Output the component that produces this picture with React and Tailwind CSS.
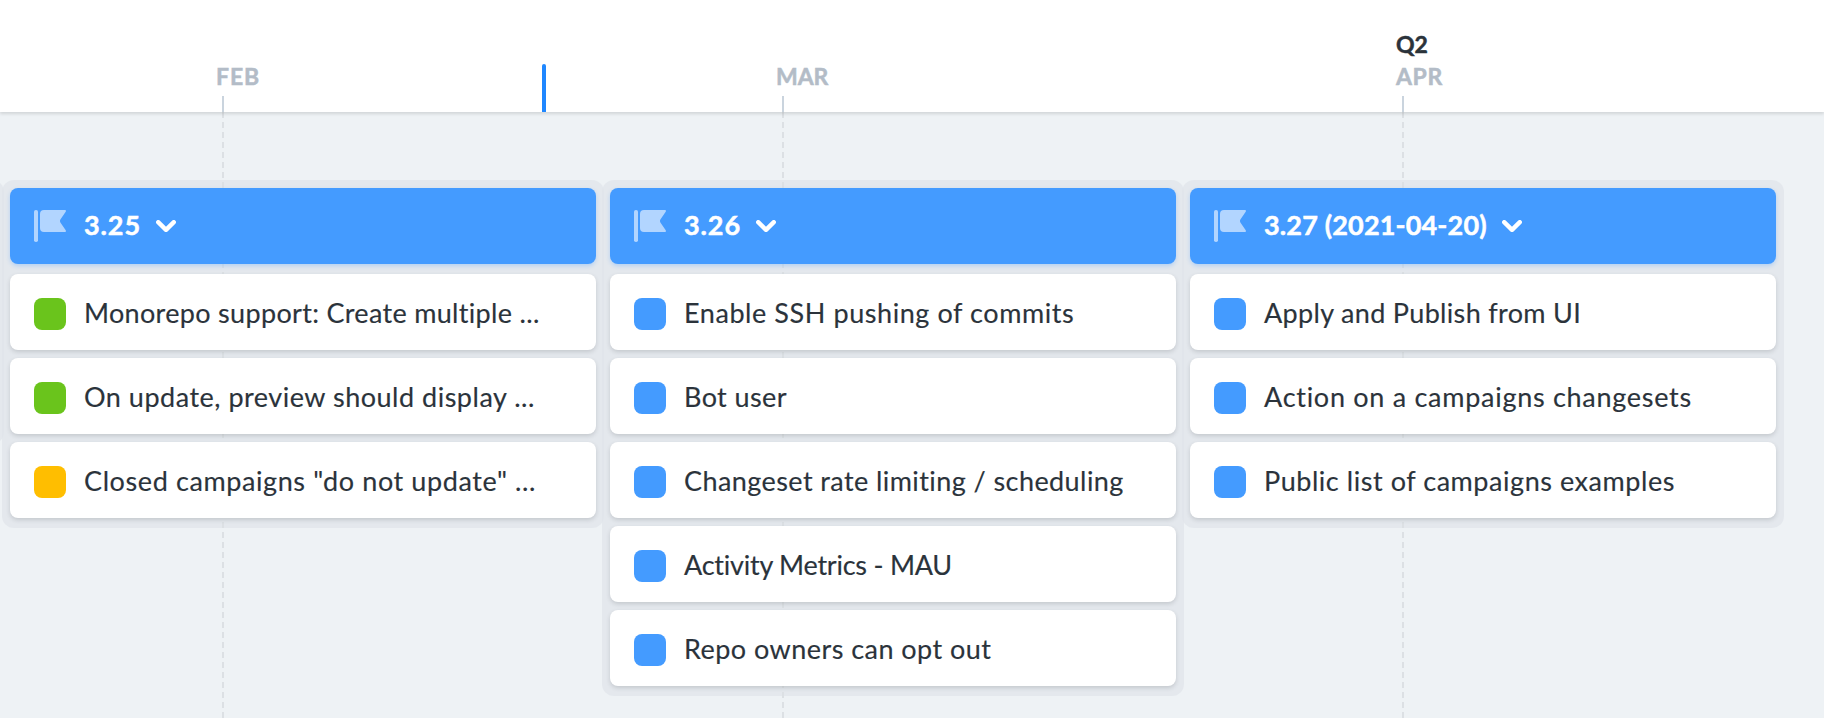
const GREEN = "bg-[#6ac41c]";
const BLUE = "bg-[#449bff]";
const AMBER = "bg-[#ffbe00]";

const releases = [
  {
    title: "3.25",
    tracking: "tracking-[0.9px]",
    width: "w-[602px]",
    items: [
      { text: "Monorepo support: Create multiple ...", color: GREEN, tracking: "tracking-[0.32px]" },
      { text: "On update, preview should display ...", color: GREEN, tracking: "tracking-[0.51px]" },
      { text: 'Closed campaigns "do not update" ...', color: AMBER, tracking: "tracking-[0.6px]" },
    ],
  },
  {
    title: "3.26",
    tracking: "tracking-[0.9px]",
    width: "w-[582px]",
    items: [
      { text: "Enable SSH pushing of commits", color: BLUE, tracking: "tracking-[0.57px]" },
      { text: "Bot user", color: BLUE, tracking: "tracking-[0.4px]" },
      { text: "Changeset rate limiting / scheduling", color: BLUE, tracking: "tracking-[0.42px]" },
      { text: "Activity Metrics - MAU", color: BLUE, tracking: "tracking-[-0.24px]" },
      { text: "Repo owners can opt out", color: BLUE, tracking: "tracking-[0.46px]" },
    ],
  },
  {
    title: "3.27 (2021-04-20)",
    tracking: "tracking-[0.15px]",
    width: "w-[602px]",
    items: [
      { text: "Apply and Publish from UI", color: BLUE, tracking: "tracking-[0.33px]" },
      { text: "Action on a campaigns changesets", color: BLUE, tracking: "tracking-[0.72px]" },
      { text: "Public list of campaigns examples", color: BLUE, tracking: "tracking-[0.55px]" },
    ],
  },
];

const months = [
  { label: "FEB", width: "w-[560px]", tracking: "tracking-[0.9px]" },
  { label: "MAR", width: "w-[620px]", tracking: "tracking-[-0.1px]" },
  { label: "APR", quarter: "Q2", width: "w-[428px]", tracking: "tracking-[0.6px]" },
];

function FlagIcon() {
  return (
    <svg className="mt-[22px] size-8 shrink-0 fill-[#b2d5ff]" viewBox="0 0 32 32">
      <rect x="0" y="0" width="4" height="32" rx="1.8" />
      <path d="M10 0H31Q32.6 .2 31.7 1.8L26.4 9.6Q25.6 11 26.4 12.4L31.7 20.2Q32.6 21.8 31 22H10Q6 22 6 18V4Q6 0 10 0Z" />
    </svg>
  );
}

function Chevron() {
  return (
    <svg className="mt-8 ml-[15px] h-[13px] w-5 shrink-0" viewBox="0 0 20 13" fill="none">
      <path d="M2.2 2.2L10 9.8L17.8 2.2" stroke="white" strokeWidth="4.4" strokeLinecap="round" strokeLinejoin="round" />
    </svg>
  );
}

function Timeline() {
  return (
    <header className="relative z-30 flex h-28 bg-white pl-[216px] shadow-[0_2px_3px_rgba(0,0,0,0.12)]">
      {months.map((m) => (
        <div
          key={m.label}
          className={`flex shrink-0 flex-col justify-end text-[23px] leading-8 font-bold [-webkit-text-stroke:0.5px] ${m.width}`}
        >
          {m.quarter && <span className="text-[#2b333b]">{m.quarter}</span>}
          <span className={`text-[#b3bcc7] ${m.tracking}`}>{m.label}</span>
          <span className="mt-1 ml-1.5 h-4 w-0.5 bg-[#cad4de]" />
        </div>
      ))}
      <div className="absolute bottom-0 left-[542px] h-12 w-1 rounded-t-sm bg-[#1f87ff]" />
    </header>
  );
}

function GridLines() {
  const line =
    "w-0.5 shrink-0 bg-[repeating-linear-gradient(to_bottom,#dce0e4_0px,#dce0e4_6px,transparent_6px,transparent_10px)]";
  return (
    <div className="pointer-events-none absolute inset-0 z-10 flex pl-[222px]">
      <div className={line} />
      <div className={`ml-[558px] ${line}`} />
      <div className={`ml-[618px] ${line}`} />
    </div>
  );
}

function Release({ release }) {
  return (
    <section className={`-ml-0.5 shrink-0 rounded-xl bg-[rgba(224,228,233,0.7)] px-2 pt-2 pb-2.5 ${release.width}`}>
      <div className="relative z-20 mb-2.5 flex h-[76px] rounded-lg bg-[#449bff] pl-6 shadow-[0_2px_4px_rgba(68,155,255,0.3)]">
        <FlagIcon />
        <h2
          className={`ml-[18px] text-[27px] leading-[73px] font-bold whitespace-nowrap text-white [-webkit-text-stroke:0.5px] ${release.tracking}`}
        >
          {release.title}
        </h2>
        <Chevron />
      </div>
      <ul className="flex flex-col gap-2">
        {release.items.map((item) => (
          <li
            key={item.text}
            className="relative z-20 flex h-[76px] rounded-lg bg-white pl-6 shadow-[0_2px_4px_rgba(40,45,55,0.17)]"
          >
            <span className={`mt-6 size-8 shrink-0 rounded-lg ${item.color}`} />
            <span
              className={`ml-[18px] text-[27px] leading-[77px] whitespace-nowrap text-[#2b333b] [-webkit-text-stroke:0.15px] ${item.tracking}`}
            >
              {item.text}
            </span>
          </li>
        ))}
      </ul>
    </section>
  );
}

export default function App() {
  return (
    <div className="flex h-[718px] w-[1824px] flex-col overflow-hidden bg-[#eef2f5] font-['Lato',sans-serif]">
      <Timeline />
      <main className="relative flex flex-1 items-start pt-[68px]">
        <GridLines />
        <div className="-ml-5 h-[264px] w-6 shrink-0 rounded-r-xl bg-[rgba(224,228,233,0.7)]" />
        {releases.map((r) => (
          <Release key={r.title} release={r} />
        ))}
      </main>
    </div>
  );
}
